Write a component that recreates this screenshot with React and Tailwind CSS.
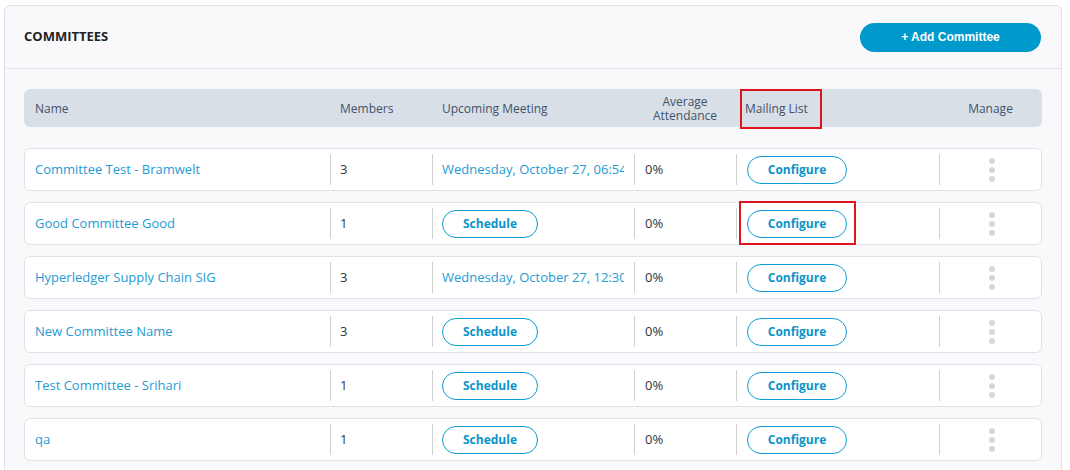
import React from 'react';

const committees = [
  { name: 'Committee Test - Bramwelt', members: 3, meeting: 'Wednesday, October 27, 06:54 PM' },
  { name: 'Good Committee Good', members: 1, meeting: null, flagged: true },
  { name: 'Hyperledger Supply Chain SIG', members: 3, meeting: 'Wednesday, October 27, 12:30 PM' },
  { name: 'New Committee Name', members: 3, meeting: null },
  { name: 'Test Committee - Srihari', members: 1, meeting: null },
  { name: 'qa', members: 1, meeting: null },
];

const headCols = 'grid grid-cols-[306px_102px_202px_102px_203px_1fr]';
const rowCols = 'grid grid-cols-[305px_102px_202px_102px_203px_1fr]';

const PillButton = ({ children, className = '' }) => (
  <button className={`h-[28px] rounded-full border border-[#0b9bd0] bg-white text-[12px] font-bold text-[#0b94c9] ${className}`}>
    {children}
  </button>
);

const Divider = () => <div className="absolute left-0 top-[5px] bottom-[5px] w-px bg-[#cfcfcf]" />;

const Row = ({ item }) => (
  <div className={`${rowCols} h-[43px] rounded-[6px] border border-[#dde3ea] bg-white`}>
    <div className="flex items-center pl-[10px] text-[13px] text-[#1f9bd3]">{item.name}</div>
    <div className="relative flex items-center pl-[10px] text-[13px] text-[#333]">
      <Divider />
      {item.members}
    </div>
    <div className="relative flex min-w-0 items-center pl-[10px] pr-[10px]">
      <Divider />
      {item.meeting ? (
        <div className="min-w-0 flex-1 overflow-hidden whitespace-nowrap text-[13px] text-[#1f9bd3]">{item.meeting}</div>
      ) : (
        <PillButton className="w-[96px]">Schedule</PillButton>
      )}
    </div>
    <div className="relative flex items-center pl-[11px] text-[13px] text-[#333]">
      <Divider />
      0%
    </div>
    <div className="relative flex items-center pl-[11px]">
      <Divider />
      <div className="relative">
        <PillButton className="w-[100px]">Configure</PillButton>
        {item.flagged && (
          <div className="absolute -left-[8px] -top-[9px] h-[44px] w-[117px] border-2 border-[#e0141e]" />
        )}
      </div>
    </div>
    <div className="relative flex items-center justify-center pl-[3px]">
      <Divider />
      <div className="flex flex-col gap-[3px]">
        <span className="h-[6px] w-[6px] rounded-full bg-[#d3d8de]" />
        <span className="h-[6px] w-[6px] rounded-full bg-[#d3d8de]" />
        <span className="h-[6px] w-[6px] rounded-full bg-[#d3d8de]" />
      </div>
    </div>
  </div>
);

export default function App() {
  return (
    <div className="h-[470px] w-[1070px] overflow-hidden bg-white pl-[4px] pt-[5px]" style={{ fontFamily: '"Open Sans", sans-serif' }}>
      <div className="w-[1058px] rounded-[6px] border border-[#dde3ea] bg-[#f9f9fb]">
        {/* Header */}
        <div className="flex h-[63px] items-center justify-between border-b border-[#dde3ea] pl-[19px] pr-[20px]">
          <h2 className="text-[13px] font-bold text-[#222]">COMMITTEES</h2>
          <button
            className="h-[29px] w-[181px] rounded-full bg-[#0099cc] text-[12px] font-bold text-white"
            style={{ fontFamily: '"Liberation Sans", Arial, sans-serif' }}
          >
            + Add Committee
          </button>
        </div>

        <div className="px-[19px] pt-[20px]">
          {/* Table head */}
          <div className={`${headCols} h-[38px] rounded-[6px] bg-[#d9dfe7] text-[12px] text-[#42526a]`}>
            <div className="flex items-center pl-[11px]">Name</div>
            <div className="flex items-center pl-[10px]">Members</div>
            <div className="flex items-center pl-[10px]">Upcoming Meeting</div>
            <div className="flex items-center justify-center text-center leading-[14px]">
              Average
              <br />
              Attendance
            </div>
            <div className="flex items-center pl-[4px]">
              <span className="flex h-[40px] items-center border-2 border-[#e0141e] pl-[3px] pr-[12px]">Mailing List</span>
            </div>
            <div className="flex items-center justify-center">Manage</div>
          </div>

          {/* Rows */}
          <div className="mt-[21px] flex flex-col gap-[11px] pb-[20px]">
            {committees.map((c) => (
              <Row key={c.name} item={c} />
            ))}
          </div>
        </div>
      </div>
    </div>
  );
}
